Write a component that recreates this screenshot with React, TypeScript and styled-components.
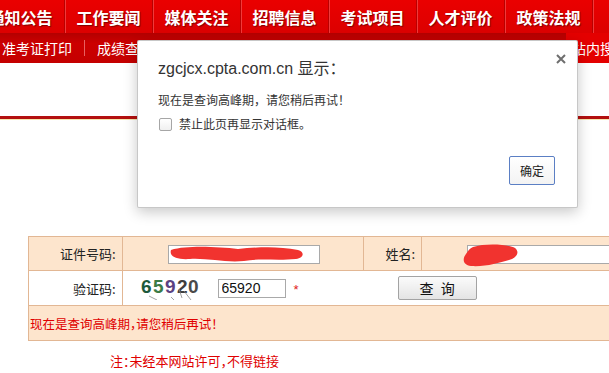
import React from 'react';
import styled, { createGlobalStyle } from 'styled-components';

const GlobalStyle = createGlobalStyle`
  html, body {
    margin: 0;
    padding: 0;
  }
  body {
    width: 609px;
    height: 373px;
    overflow: hidden;
    background: #fff;
    font-family: "Noto Sans CJK SC", "Liberation Sans", sans-serif;
  }
`

const Page = styled.div`
  position: relative;
  width: 609px;
  height: 373px;
  overflow: hidden;
`

const TopNav = styled.nav`
  display: flex;
  height: 33px;
  margin-left: -23px;
  background: linear-gradient(#ea0000, #dc0000);
`

const NavItem = styled.a`
  flex: 0 0 88px;
  box-sizing: border-box;
  display: flex;
  align-items: center;
  justify-content: center;
  color: #fff;
  font-size: 16px;
  font-weight: 700;
  line-height: 1;
  text-shadow: 1px 1px 1px rgba(90, 0, 0, 0.7);
  border-right: 1px solid #b90000;
  box-shadow: 1px 0 0 #f03a3a;
`

const SubNav = styled.div`
  display: flex;
  align-items: center;
  height: 30px;
  padding-left: 2px;
  background: linear-gradient(#b40000, #cc0000 35%, #c40000);
  color: #fff;
  font-size: 14px;
`

const SubLink = styled.a`
  white-space: nowrap;
  line-height: 1;
`

const SubSep = styled.span`
  width: 1px;
  height: 16px;
  margin: 0 12px;
  background: #e86060;
`

const SearchBox = styled.div`
  margin-left: auto;
  align-self: stretch;
  width: 37px;
  padding-left: 6px;
  display: flex;
  align-items: center;
  overflow: hidden;
  white-space: nowrap;
  background: #e40000;
`

const Band = styled.div`
  height: 53px;
  border-bottom: 3px solid #b3100f;
  box-shadow: 0 1px 0 #f6e7b0;
`

const FormTable = styled.table`
  margin: 117px 0 0 28px;
  width: 640px;
  border-collapse: collapse;
  font-size: 13px;
  color: #222;

  td {
    border: 1px solid #e2b794;
    height: 34px;
    padding: 0;
  }
`

const Row = styled.tr<{ $tint?: boolean }>`
  background: ${p => (p.$tint ? '#fde5cd' : '#fff')};
`

const LabelCell = styled.td<{ $w: number }>`
  width: ${p => p.$w}px;
  text-align: right;
  padding-right: 6px !important;
  box-sizing: border-box;
`

const FieldCell = styled.td<{ $w?: number }>`
  ${p => (p.$w ? `width: ${p.$w}px;` : '')}
  padding-left: 45px !important;
  box-sizing: border-box;
`

const Redacted = styled.span`
  position: relative;
  display: inline-block;
  vertical-align: middle;
`

const Blob = styled.svg`
  position: absolute;
  pointer-events: none;
`

const TextInput = styled.input<{ $w: number }>`
  display: block;
  width: ${p => p.$w}px;
  height: 19px;
  box-sizing: border-box;
  margin: 0;
  padding: 0 3px;
  border: 1px solid #a9a9a9;
  font-family: "Liberation Sans", sans-serif;
  font-size: 14px;
  color: #111;
  background: #fff;
`

const CodeCell = styled.td`
  padding-left: 18px !important;
`

const CodeLine = styled.div`
  display: flex;
  align-items: center;
`

const CodeGap = styled.span`
  width: 17px;
`

const Star = styled.span`
  margin-left: 8px;
  color: #e02020;
  font-family: "Liberation Sans", sans-serif;
  font-size: 13px;
  padding-top: 3px;
`

const QueryButton = styled.button`
  margin-left: 99px;
  width: 79px;
  height: 24px;
  box-sizing: border-box;
  border: 1px solid #a3a3a3;
  border-radius: 2px;
  background: linear-gradient(#fbfbfb, #e4e4e4);
  font-family: "Noto Sans CJK SC", sans-serif;
  font-size: 14px;
  word-spacing: 4px;
  color: #111;
  padding: 0;
`

const NoticeCell = styled.td`
  padding-left: 1px !important;
  color: #e00000;
  font-size: 12.5px;
  font-feature-settings: "halt";
`

const Note = styled.p`
  margin: 12px 0 0 110px;
  color: #e00000;
  font-size: 13px;
  font-feature-settings: "halt";
  line-height: 16px;
`

const Dialog = styled.div`
  position: absolute;
  left: 137px;
  top: 40px;
  width: 441px;
  height: 168px;
  box-sizing: border-box;
  padding: 18px 22px 0 20px;
  background: #fff;
  border: 1px solid rgba(0, 0, 0, 0.22);
  border-radius: 2px;
  box-shadow: 0 4px 14px rgba(0, 0, 0, 0.22);
  color: #333;
`

const Close = styled.svg`
  position: absolute;
  top: 13px;
  right: 11px;
`

const Title = styled.div`
  font-family: "Liberation Sans", "Noto Sans CJK SC", sans-serif;
  font-size: 16px;
  line-height: 19px;
  color: #333;
`

const Message = styled.div`
  margin-top: 14px;
  font-size: 12px;
  line-height: 16px;
`

const CheckRow = styled.label`
  margin-top: 8px;
  display: flex;
  align-items: center;
  gap: 7px;
  font-size: 12px;
  line-height: 16px;
`

const CheckBox = styled.span`
  width: 13px;
  height: 13px;
  margin-left: 1px;
  box-sizing: border-box;
  border: 1px solid #a6a6a6;
  border-radius: 2px;
  background: linear-gradient(#fff, #f0f0f0);
`

const DialogFooter = styled.div`
  margin-top: 24px;
  display: flex;
  justify-content: flex-end;
`

const OkButton = styled.button`
  width: 46px;
  height: 29px;
  box-sizing: border-box;
  padding: 0;
  border: 1px solid #5b7fc4;
  border-radius: 2px;
  background: linear-gradient(#fff, #f3f3f3);
  font-family: "Noto Sans CJK SC", sans-serif;
  font-size: 12px;
  color: #222;
`

const navItems = ['通知公告', '工作要闻', '媒体关注', '招聘信息', '考试项目', '人才评价', '政策法规']

const Captcha = () => (
  <svg width="60" height="24" viewBox="0 0 60 24">
    <g fontFamily="Liberation Sans, sans-serif" fontWeight="700" fontSize="19">
      <text x="0" y="17" fill="#1d5a3c">6</text>
      <text x="12" y="17" fill="#3b7b45">5</text>
      <text x="24" y="17" fill="#5b4282">9</text>
      <text x="36" y="17" fill="#3e3e3e">2</text>
      <text x="47" y="17" fill="#4a4a4a">0</text>
    </g>
    <g stroke="#8a8a8a" strokeWidth="0.8" fill="none">
      <path d="M8 20 L16 24" />
      <path d="M38 13 L41 22" />
      <path d="M43 15 L50 24" />
      <path d="M30 21 L33 24" />
    </g>
  </svg>
)

const App = () => {
  return (
    <Page>
      <GlobalStyle />
      <TopNav>
        {navItems.map(t => (
          <NavItem key={t}>{t}</NavItem>
        ))}
      </TopNav>
      <SubNav>
        <SubLink>准考证打印</SubLink>
        <SubSep />
        <SubLink>成绩查询</SubLink>
        <SearchBox>站内搜索</SearchBox>
      </SubNav>
      <Band />

      <FormTable>
        <tbody>
          <Row $tint>
            <LabelCell $w={94}>证件号码:</LabelCell>
            <FieldCell $w={242}>
              <Redacted>
                <TextInput $w={152} defaultValue="" />
                <Blob width="138" height="20" viewBox="0 0 138 20" style={{ left: 0, top: -1 }}>
                  <path
                    d="M3 6 C20 1 50 3 70 5 C90 3 110 2 130 6 C137 8 136 14 128 15 C108 17 92 14 76 17 C58 19 40 14 22 15 C8 16 1 12 3 6 Z"
                    fill="#f1332f"
                  />
                </Blob>
              </Redacted>
            </FieldCell>
            <LabelCell $w={58}>姓名:</LabelCell>
            <FieldCell>
              <Redacted>
                <TextInput $w={200} defaultValue="" />
                <Blob width="56" height="24" viewBox="0 0 56 24" style={{ left: -4, top: -1 }}>
                  <path
                    d="M10 3 C22 -1 44 0 52 4 C57 8 54 14 46 16 C36 19 22 23 8 22 C0 21 -1 15 3 10 C5 7 6 5 10 3 Z"
                    fill="#f1332f"
                  />
                </Blob>
              </Redacted>
            </FieldCell>
          </Row>
          <Row>
            <LabelCell $w={94}>验证码:</LabelCell>
            <CodeCell colSpan={3}>
              <CodeLine>
                <Captcha />
                <CodeGap />
                <TextInput $w={68} defaultValue="65920" />
                <Star>*</Star>
                <QueryButton>查 询</QueryButton>
              </CodeLine>
            </CodeCell>
          </Row>
          <Row $tint>
            <NoticeCell colSpan={4}>现在是查询高峰期，请您稍后再试！</NoticeCell>
          </Row>
        </tbody>
      </FormTable>
      <Note>注：未经本网站许可，不得链接</Note>

      <Dialog>
        <Close width="10" height="10" viewBox="0 0 10 10">
          <path d="M1 1 L9 9 M9 1 L1 9" stroke="#6e6e6e" strokeWidth="2" />
        </Close>
        <Title>zgcjcx.cpta.com.cn 显示：</Title>
        <Message>现在是查询高峰期，请您稍后再试！</Message>
        <CheckRow>
          <CheckBox />
          禁止此页再显示对话框。
        </CheckRow>
        <DialogFooter>
          <OkButton>确定</OkButton>
        </DialogFooter>
      </Dialog>
    </Page>
  );
};

export default App;
